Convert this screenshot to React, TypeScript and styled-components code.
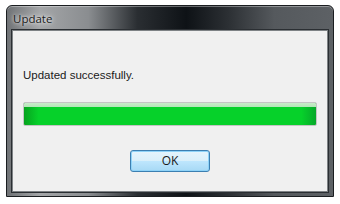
import styled, { createGlobalStyle } from "styled-components";

const GlobalStyle = createGlobalStyle`
  html, body {
    margin: 0;
    padding: 0;
    background: #ffffff;
  }
  body {
    font-family: "Liberation Sans", "DejaVu Sans", sans-serif;
  }
`;

export default function App() {
  return (
    <>
      <GlobalStyle />
      <Window>
        <TitleBar>
          <Title>Update</Title>
        </TitleBar>
        <Content>
          <Message>Updated successfully.</Message>
          <ProgressTrack>
            <ProgressFill style={{ width: "100%" }} />
          </ProgressTrack>
          <ButtonRow>
            <OkButton>OK</OkButton>
          </ButtonRow>
        </Content>
      </Window>
    </>
  );
}

const Window = styled.div`
  margin: 5px 0 0 6px;
  width: 328px;
  height: 192px;
  box-sizing: border-box;
  display: flex;
  flex-direction: column;
  border-radius: 6px 6px 0 0;
  border: 1px solid #1a1d20;
  background: linear-gradient(
    to right,
    #6f7275 0%,
    #a4a6a8 10%,
    #8a8d90 25%,
    #2a2e32 40%,
    #0e1216 55%,
    #2c3034 68%,
    #55595d 82%,
    #5d6165 100%
  );
  box-shadow: inset 0 1px 0 rgba(255, 255, 255, 0.35);
  padding: 0 5px 4px 5px;
`;

const TitleBar = styled.div`
  height: 24px;
  display: flex;
  align-items: center;
  padding-left: 1px;
  flex-shrink: 0;
`;

const Title = styled.span`
  font-family: "Open Sans", "DejaVu Sans", sans-serif;
  font-size: 11.5px;
  color: #1c1c1c;
  text-shadow: 0 0 6px rgba(255, 255, 255, 0.9), 0 0 3px rgba(255, 255, 255, 0.8);
  margin-top: 1px;
`;

const Content = styled.div`
  flex: 1;
  background: #f0f0f0;
  border: 1px solid #7e8285;
  box-shadow: 0 0 0 1px #2b2f33;
  display: flex;
  flex-direction: column;
  padding: 0 10px 0 10px;
`;

const Message = styled.div`
  font-size: 11.5px;
  color: #1a1a1a;
  margin-top: 37px;
  height: 14px;
  line-height: 14px;
`;

const ProgressTrack = styled.div`
  margin-top: 20px;
  height: 22px;
  border: 1px solid #c4c4c4;
  border-radius: 2px;
  background: #e6e6e6;
  overflow: hidden;
`;

const ProgressFill = styled.div`
  height: 100%;
  background:
    linear-gradient(to bottom, #c9ecc9 0%, #b4e6b8 18%, rgba(255, 255, 255, 0) 19%),
    linear-gradient(to right, #07a31f 0%, #06d12a 5%, #06d12a 95%, #07a82a 100%);
`;

const ButtonRow = styled.div`
  display: flex;
  justify-content: center;
  margin-top: 24px;
`;

const OkButton = styled.button`
  width: 80px;
  height: 22px;
  box-sizing: border-box;
  border: 1px solid #3c7fb1;
  border-radius: 3px;
  background: linear-gradient(to bottom, #e5f4fc 0%, #d9effa 50%, #bee6fd 51%, #a7d9f5 100%);
  box-shadow: inset 0 0 0 1px #8fd3f8;
  font-family: "Open Sans", "DejaVu Sans", sans-serif;
  font-size: 12px;
  color: #1a1a1a;
  padding: 0;
  line-height: 18px;
`;
